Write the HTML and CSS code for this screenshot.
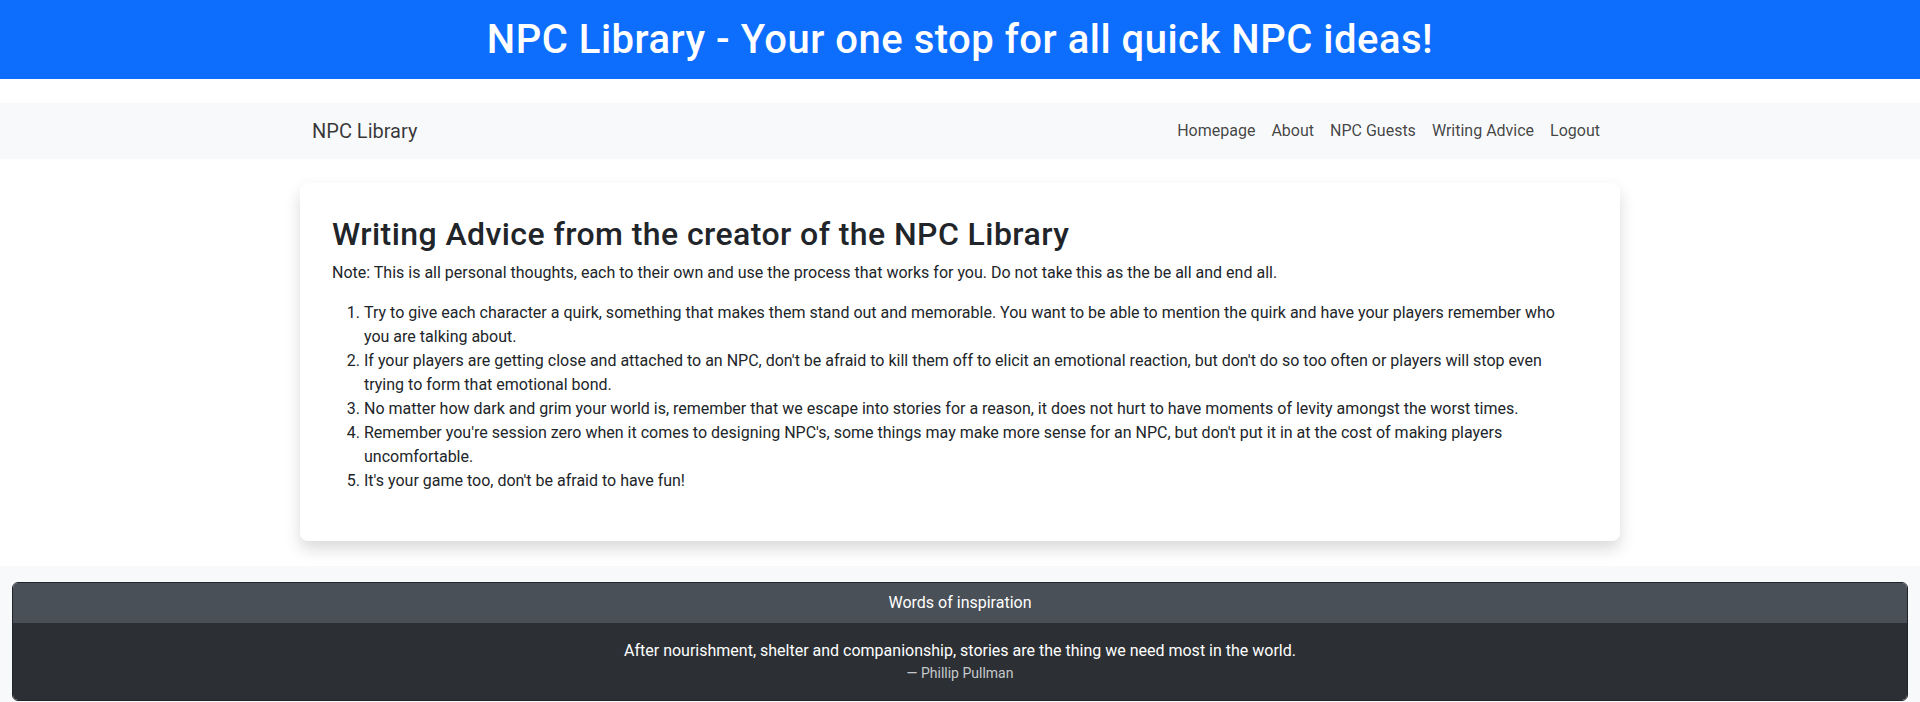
FILE: index.html
```html
<!DOCTYPE html>
<html lang="en">
<head>
<meta charset="utf-8">
<title>NPC Library - Writing Advice</title>
<link rel="stylesheet" href="styles.css">
</head>
<body>
<header class="site-header">
  <h1 class="site-title">NPC Library - Your one stop for all quick NPC ideas!</h1>
</header>

<nav class="navbar">
  <div class="nav-container">
    <a class="brand" href="#">NPC Library</a>
    <ul class="nav-links">
      <li><a class="nav-link" href="#">Homepage</a></li>
      <li><a class="nav-link" href="#">About</a></li>
      <li><a class="nav-link" href="#">NPC Guests</a></li>
      <li><a class="nav-link" href="#">Writing Advice</a></li>
      <li><a class="nav-link" href="#">Logout</a></li>
    </ul>
  </div>
</nav>

<main class="main">
  <section class="advice-card">
    <h2 class="advice-title">Writing Advice from the creator of the NPC Library</h2>
    <p class="advice-note">Note: This is all personal thoughts, each to their own and use the process that works for you. Do not take this as the be all and end all.</p>
    <ol class="advice-list">
      <li>Try to give each character a quirk, something that makes them stand out and memorable. You want to be able to mention the quirk and have your players remember who you are talking about.</li>
      <li>If your players are getting close and attached to an NPC, don't be afraid to kill them off to elicit an emotional reaction, but don't do so too often or players will stop even trying to form that emotional bond.</li>
      <li>No matter how dark and grim your world is, remember that we escape into stories for a reason, it does not hurt to have moments of levity amongst the worst times.</li>
      <li>Remember you're session zero when it comes to designing NPC's, some things may make more sense for an NPC, but don't put it in at the cost of making players uncomfortable.</li>
      <li>It's your game too, don't be afraid to have fun!</li>
    </ol>
  </section>
</main>

<footer class="footer">
  <div class="quote-card">
    <div class="quote-header">Words of inspiration</div>
    <div class="quote-body">
      <blockquote class="quote-text">After nourishment, shelter and companionship, stories are the thing we need most in the world.</blockquote>
      <div class="quote-author">— Phillip Pullman</div>
    </div>
  </div>
</footer>
</body>
</html>
```
FILE: styles.css
```css
* { box-sizing: border-box; }

html, body {
  margin: 0;
  padding: 0;
}

body {
  font-family: Roboto, "Liberation Sans", sans-serif;
  font-size: 16px;
  line-height: 1.5;
  color: #212529;
  background: #ffffff;
}

.site-header {
  background: #0d6efd;
  height: 79px;
  display: flex;
  align-items: center;
  justify-content: center;
}

.site-title {
  margin: 0;
  color: #ffffff;
  font-size: 40px;
  font-weight: 500;
  line-height: 48px;
  letter-spacing: 0.5px;
  text-align: center;
}

.navbar {
  margin-top: 24px;
  background: #f8f9fa;
  height: 56px;
  display: flex;
  align-items: center;
}

.nav-container {
  width: 1320px;
  margin: 0 auto;
  padding: 0 12px;
  display: flex;
  align-items: center;
  justify-content: space-between;
}

.brand {
  font-size: 20px;
  line-height: 30px;
  color: rgba(0, 0, 0, 0.78);
  text-decoration: none;
}

.nav-links {
  list-style: none;
  margin: 0;
  padding: 0;
  display: flex;
}

.nav-link {
  display: block;
  padding: 8px;
  color: rgba(0, 0, 0, 0.74);
  text-decoration: none;
  font-size: 16px;
  line-height: 24px;
}

.main {
  width: 1320px;
  margin: 24px auto 0;
  padding-bottom: 25px;
}

.advice-card {
  background: #ffffff;
  border-radius: 8px;
  box-shadow: 0 8px 16px rgba(0, 0, 0, 0.15);
  padding: 32px;
}

.advice-title {
  margin: 0 0 8px;
  font-size: 32px;
  font-weight: 500;
  line-height: 38px;
  letter-spacing: 0.42px;
}

.advice-note {
  margin: 0 0 16px;
}

.advice-list {
  margin: 0 0 16px;
  padding-left: 32px;
  padding-right: 22px;
}

.footer {
  background: #f8f9fa;
  padding: 16px 12px 16px;
}

.quote-card {
  border: 1px solid #212529;
  border-radius: 6px;
  overflow: hidden;
  color: #ffffff;
  text-align: center;
}

.quote-header {
  background: #495057;
  padding: 8px 16px;
  line-height: 24px;
}

.quote-body {
  background: #2c3034;
  padding: 16px;
}

.quote-text {
  margin: 0;
  line-height: 24px;
}

.quote-author {
  font-size: 14px;
  line-height: 21px;
  color: #c5c8cb;
}
```
